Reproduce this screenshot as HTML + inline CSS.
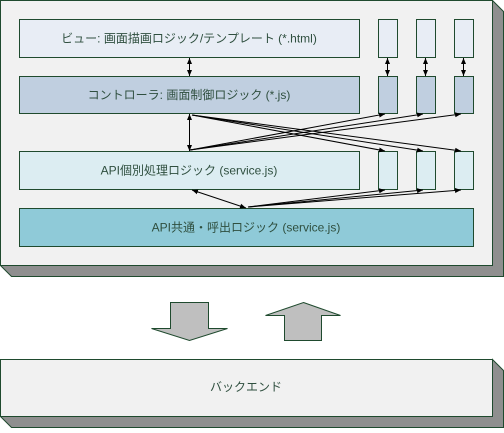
<!DOCTYPE html>
<html><head><meta charset="utf-8"><style>
body{margin:0;width:504px;height:428px;background:#fff;overflow:hidden;font-family:"Liberation Sans","Noto Sans CJK JP",sans-serif}
svg text{font-family:"Liberation Sans","Noto Sans CJK JP",sans-serif;font-size:12px;fill:#2f4f3f}
</style></head><body>
<svg width="504" height="428" viewBox="0 0 504 428">
<defs><marker id="a" markerWidth="6" markerHeight="6" refX="6" refY="3" orient="auto-start-reverse" markerUnits="userSpaceOnUse"><path d="M0,0.5 L6,3 L0,5.5z" fill="#000"/></marker></defs>
<g stroke="#1f4a2e" stroke-width="1">
<polygon points="492.5,0.5 503.5,11.5 503.5,276.5 11.5,276.5 0.5,265.5 492.5,265.5" fill="#8f8f8f"/>
<rect x="0.5" y="0.5" width="492" height="265" fill="#f1f1f1"/>
<rect x="19.5" y="19.5" width="340" height="38" fill="#e8edf5"/>
<rect x="378.5" y="19.5" width="19" height="38" fill="#e8edf5"/>
<rect x="416.5" y="19.5" width="19" height="38" fill="#e8edf5"/>
<rect x="454.5" y="19.5" width="19" height="38" fill="#e8edf5"/>
<rect x="19.5" y="76.5" width="340" height="37" fill="#c0cfe0"/>
<rect x="378.5" y="76.5" width="19" height="37" fill="#c0cfe0"/>
<rect x="416.5" y="76.5" width="19" height="37" fill="#c0cfe0"/>
<rect x="454.5" y="76.5" width="19" height="37" fill="#c0cfe0"/>
<rect x="19.5" y="151.5" width="340" height="38" fill="#dcedf2"/>
<rect x="378.5" y="151.5" width="19" height="38" fill="#dcedf2"/>
<rect x="416.5" y="151.5" width="19" height="38" fill="#dcedf2"/>
<rect x="454.5" y="151.5" width="19" height="38" fill="#dcedf2"/>
<rect x="19.5" y="208.5" width="454" height="38" fill="#8fcad8"/>
<polygon points="492.5,359.5 503.5,370.5 503.5,427.5 11.5,427.5 0.5,416.5 492.5,416.5" fill="#8f8f8f"/>
<rect x="0.5" y="359.5" width="492" height="57" fill="#f1f1f1"/>
<polygon points="170.5,302.5 208.5,302.5 208.5,328.5 227.5,328.5 189.5,340.5 151.5,328.5 170.5,328.5" fill="#bfbfbf"/>
<polygon points="303.5,302.5 340.5,315.5 321.5,315.5 321.5,340.5 284.5,340.5 284.5,315.5 265.5,315.5" fill="#bfbfbf"/>
</g>
<g stroke="#000" stroke-width="1" fill="none">
<line x1="189.5" y1="58" x2="189.5" y2="76" marker-start="url(#a)" marker-end="url(#a)"/>
<line x1="387.5" y1="58" x2="387.5" y2="76" marker-start="url(#a)" marker-end="url(#a)"/>
<line x1="425.5" y1="58" x2="425.5" y2="76" marker-start="url(#a)" marker-end="url(#a)"/>
<line x1="463.5" y1="58" x2="463.5" y2="76" marker-start="url(#a)" marker-end="url(#a)"/>
<line x1="189.5" y1="114" x2="189.5" y2="151" marker-start="url(#a)" marker-end="url(#a)"/>
<line x1="190" y1="150" x2="385" y2="114" marker-end="url(#a)"/>
<line x1="190" y1="150" x2="423" y2="114" marker-end="url(#a)"/>
<line x1="190" y1="150" x2="461" y2="114" marker-end="url(#a)"/>
<line x1="192" y1="115" x2="385" y2="151" marker-end="url(#a)"/>
<line x1="192" y1="115" x2="423" y2="151" marker-end="url(#a)"/>
<line x1="192" y1="115" x2="461" y2="151" marker-end="url(#a)"/>
<line x1="192" y1="190" x2="246" y2="208" marker-start="url(#a)" marker-end="url(#a)"/>
<line x1="248" y1="207" x2="385" y2="190" marker-end="url(#a)"/>
<line x1="248" y1="207" x2="423" y2="190" marker-end="url(#a)"/>
<line x1="248" y1="207" x2="461" y2="190" marker-end="url(#a)"/>
</g>
<text x="189" y="42.5" text-anchor="middle">ビュー: 画面描画ロジック/テンプレート (*.html)</text>
<text x="189" y="99" text-anchor="middle">コントローラ: 画面制御ロジック (*.js)</text>
<text x="189" y="174.5" text-anchor="middle">API個別処理ロジック (service.js)</text>
<text x="246" y="231.5" text-anchor="middle">API共通・呼出ロジック (service.js)</text>
<text x="246" y="391" text-anchor="middle">バックエンド</text>
</svg>
</body></html>
